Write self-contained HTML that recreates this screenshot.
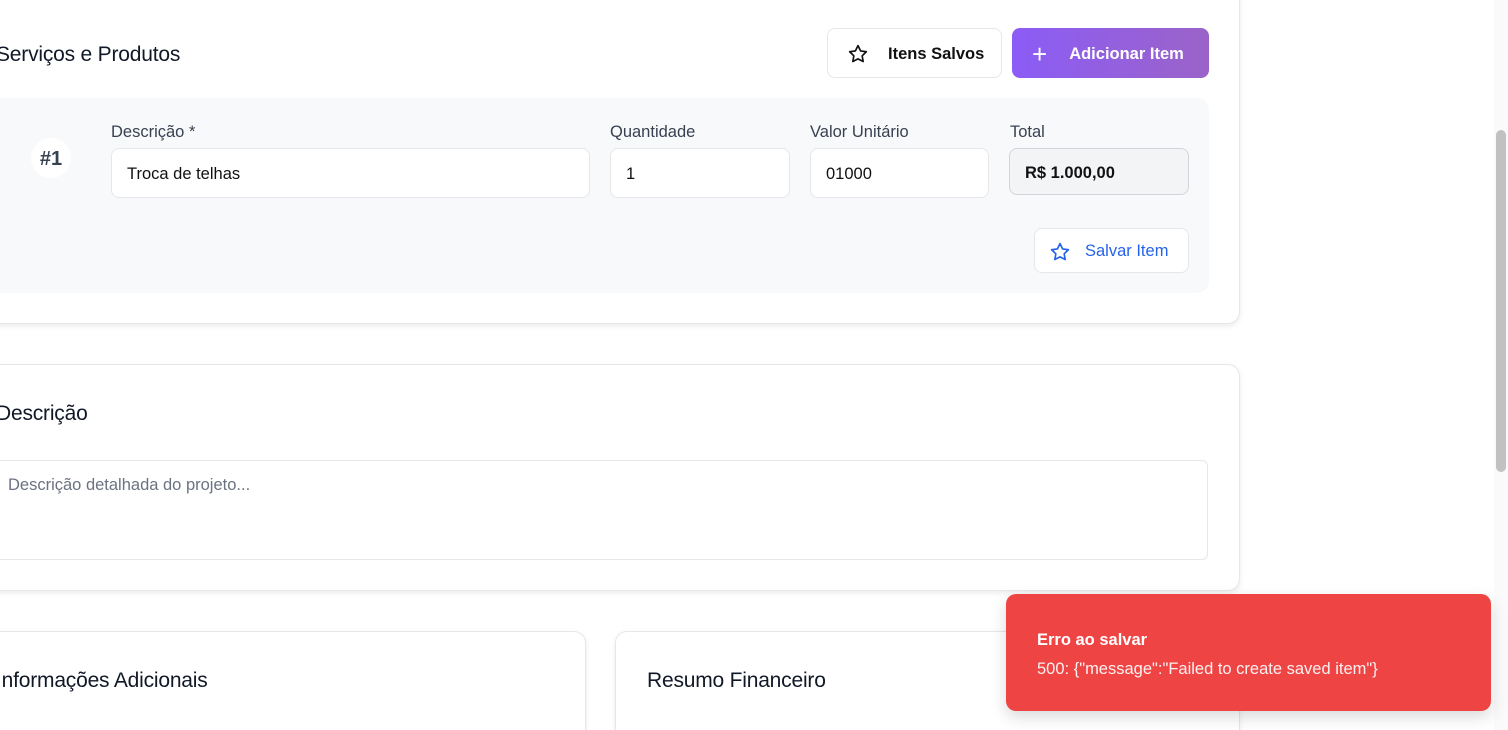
<!DOCTYPE html><html><head><style>
html,body{margin:0;width:1508px;height:730px;overflow:hidden}
body{background:#fff;font-family:"Liberation Sans",sans-serif;position:relative;color:#1f2937}
.card{position:absolute;background:#fff;border:1px solid #e5e7eb;border-radius:12px;box-shadow:0 2px 6px rgba(0,0,0,.08)}
.h{position:absolute;font-size:21px;font-weight:500;color:#111827;letter-spacing:-0.2px}
.lbl{position:absolute;font-size:16.5px;color:#374151;font-weight:500}
.in{position:absolute;background:#fff;border:1px solid #e5e7eb;border-radius:8px;height:50px;box-sizing:border-box;padding:0 15px;line-height:50px;font-size:16.5px;color:#111}
.btn{position:absolute;border-radius:8px;box-sizing:border-box;font-size:16.5px;font-weight:600;display:flex;align-items:center;padding-top:2px}
</style></head><body>
<div class="card" style="left:-20px;top:-20px;width:1258px;height:342px"></div>
<div class="h" style="left:-4px;top:43px">Serviços e Produtos</div>
<div class="btn" style="left:827px;top:28px;width:175px;height:50px;border:1px solid #e5e7eb;background:#fff;color:#111">
<svg width="20" height="20" viewBox="0 0 24 24" style="margin-left:20px" fill="none" stroke="#111" stroke-width="2" stroke-linejoin="round"><path d="M12 2l3.1 6.3 6.9 1-5 4.9 1.2 6.8L12 17.8 5.8 21l1.2-6.8-5-4.9 6.9-1z"/></svg><span style="margin-left:20px">Itens Salvos</span></div>
<div class="btn" style="left:1012px;top:28px;width:197px;height:50px;background:linear-gradient(90deg,#8b5cf6,#9b63c8);color:#fff">
<span style="margin-left:20px;font-size:26px;font-weight:300">+</span><span style="margin-left:22px">Adicionar Item</span></div>
<div style="position:absolute;left:-10px;top:98px;width:1219px;height:195px;background:#f8f9fb;border-radius:12px"></div>
<div style="position:absolute;left:31px;top:138px;width:40px;height:40px;border-radius:50%;background:#fff;text-align:center;line-height:42px;font-size:20px;font-weight:600;color:#374151">#1</div>
<div class="lbl" style="left:111px;top:123px">Descrição *</div>
<div class="in" style="left:111px;top:148px;width:479px">Troca de telhas</div>
<div class="lbl" style="left:610px;top:123px">Quantidade</div>
<div class="in" style="left:610px;top:148px;width:180px">1</div>
<div class="lbl" style="left:810px;top:123px">Valor Unitário</div>
<div class="in" style="left:810px;top:148px;width:179px">01000</div>
<div class="lbl" style="left:1010px;top:123px">Total</div>
<div class="in" style="left:1009px;top:148px;width:180px;height:47px;line-height:48px;background:#f3f4f6;border-color:#d1d5db;font-weight:600">R$ 1.000,00</div>
<div class="btn" style="left:1034px;top:228px;width:155px;height:45px;border:1px solid #e5e7eb;background:#fff;color:#2563eb;font-weight:500">
<svg width="20" height="20" viewBox="0 0 24 24" style="margin-left:15px" fill="none" stroke="#2563eb" stroke-width="2" stroke-linejoin="round"><path d="M12 2l3.1 6.3 6.9 1-5 4.9 1.2 6.8L12 17.8 5.8 21l1.2-6.8-5-4.9 6.9-1z"/></svg><span style="margin-left:15px">Salvar Item</span></div>

<div class="card" style="left:-20px;top:364px;width:1258px;height:225px"></div>
<div class="h" style="left:-4px;top:402px">Descrição</div>
<div style="position:absolute;left:-10px;top:460px;width:1218px;height:100px;border:1px solid #e5e7eb;border-radius:6px;box-sizing:border-box;padding:15px 17px;font-size:16.5px;color:#6b7280">Descrição detalhada do projeto...</div>

<div class="card" style="left:-20px;top:631px;width:604px;height:120px"></div>
<div class="h" style="left:-4px;top:669px">Informações Adicionais</div>
<div class="card" style="left:615px;top:631px;width:623px;height:120px"></div>
<div class="h" style="left:647px;top:669px">Resumo Financeiro</div>

<div style="position:absolute;left:1494px;top:0;width:14px;height:730px;background:#fafafa"></div>
<div style="position:absolute;left:1496px;top:130px;width:10px;height:342px;background:#c1c1c1;border-radius:5px"></div>

<div style="position:absolute;left:1006px;top:594px;width:485px;height:117px;background:#ef4444;border-radius:10px;box-shadow:0 6px 16px rgba(0,0,0,.15);color:#fff">
<div style="position:absolute;left:31px;top:37px;font-size:16.5px;font-weight:600">Erro ao salvar</div>
<div style="position:absolute;left:31px;top:66px;font-size:16.5px;opacity:.92">500: {"message":"Failed to create saved item"}</div>
</div>
</body></html>
